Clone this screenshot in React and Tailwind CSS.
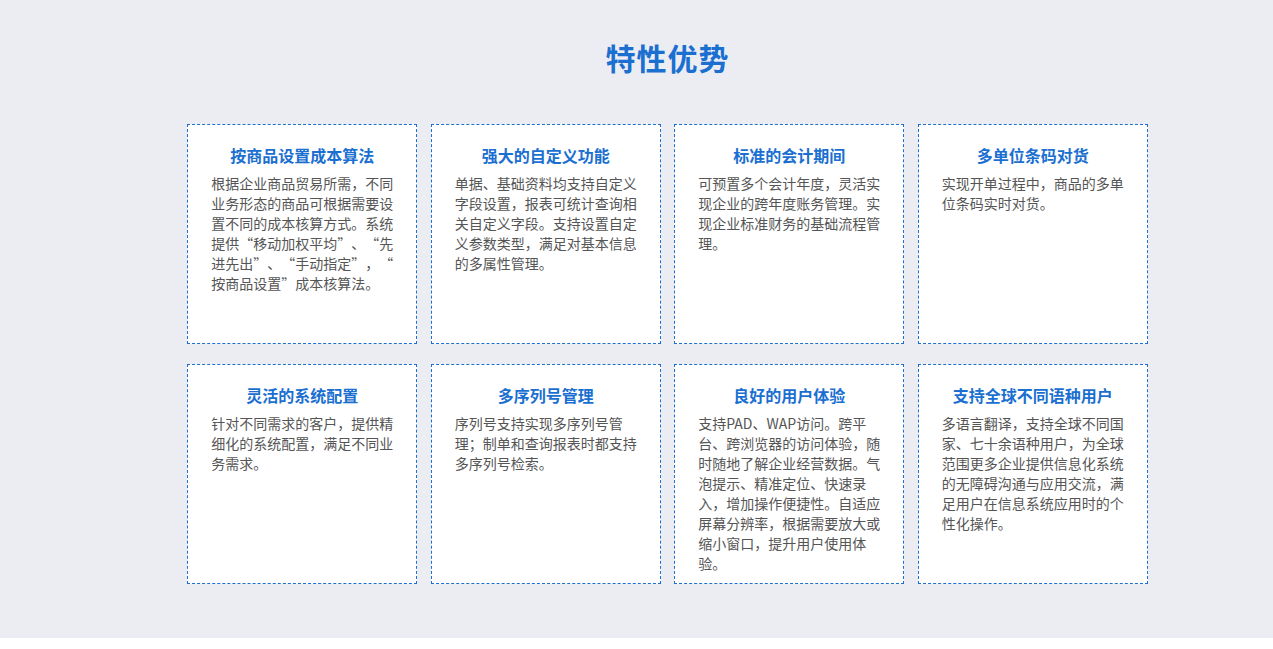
const items = [
  ["按商品设置成本算法", "根据企业商品贸易所需，不同业务形态的商品可根据需要设置不同的成本核算方式。系统提供“移动加权平均”、“先进先出”、“手动指定”，“按商品设置”成本核算法。"],
  ["强大的自定义功能", "单据、基础资料均支持自定义字段设置，报表可统计查询相关自定义字段。支持设置自定义参数类型，满足对基本信息的多属性管理。"],
  ["标准的会计期间", "可预置多个会计年度，灵活实现企业的跨年度账务管理。实现企业标准财务的基础流程管理。"],
  ["多单位条码对货", "实现开单过程中，商品的多单位条码实时对货。"],
  ["灵活的系统配置", "针对不同需求的客户，提供精细化的系统配置，满足不同业务需求。"],
  ["多序列号管理", "序列号支持实现多序列号管理；制单和查询报表时都支持多序列号检索。"],
  ["良好的用户体验", "支持PAD、WAP访问。跨平台、跨浏览器的访问体验，随时随地了解企业经营数据。气泡提示、精准定位、快速录入，增加操作便捷性。自适应屏幕分辨率，根据需要放大或缩小窗口，提升用户使用体验。"],
  ["支持全球不同语种用户", "多语言翻译，支持全球不同国家、七十余语种用户，为全球范围更多企业提供信息化系统的无障碍沟通与应用交流，满足用户在信息系统应用时的个性化操作。"],
];
function Body({ text }) {
  return text.split(/([“”])/).map((s, i) =>
    s === "“" || s === "”" ? (
      <span key={i} className="inline-block w-[14px] text-center">{s}</span>
    ) : (
      <span key={i}>{s}</span>
    )
  );
}
export default function App() {
  return (
    <div className="w-full bg-white" style={{ fontFamily: '"Noto Sans CJK SC", "Noto Sans", sans-serif' }}>
      <div className="bg-[#ecedf2] h-[638px] flex flex-col items-center pl-[62px]">
        <h1 className="mt-[36px] text-[30px] font-bold text-[#1a6fd0] leading-[42px] tracking-[1px]">特性优势</h1>
        <div className="mt-[46px] grid grid-cols-[repeat(4,230px)] gap-x-[13.5px] gap-y-[20px]">
          {items.map(([t, d]) => (
            <div key={t} className="h-[220px] bg-white border border-dashed border-[#1a6fd0] px-[23px] pt-[18px]">
              <div className="text-center text-[16px] font-bold text-[#1a6fd0] leading-[24px]">{t}</div>
              <p className="mt-[6px] text-[14px] leading-[20px] text-[#555]"><Body text={d} /></p>
            </div>
          ))}
        </div>
      </div>
    </div>
  );
}
